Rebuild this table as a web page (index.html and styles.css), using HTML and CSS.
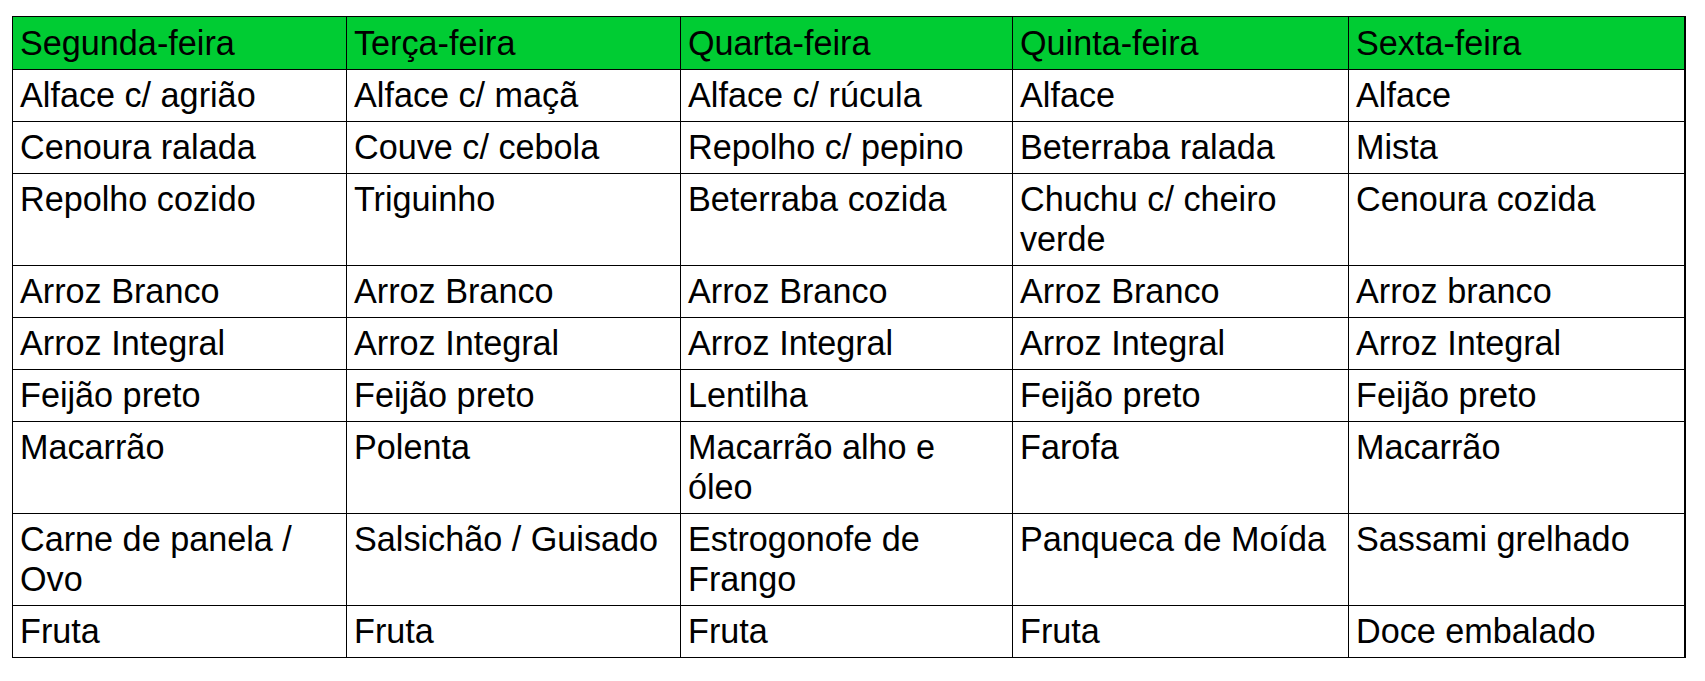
FILE: index.html
```html
<!DOCTYPE html>
<html lang="pt-BR">
<head>
<meta charset="utf-8">
<title>Cardápio</title>
<link rel="stylesheet" href="styles.css">
</head>
<body>
<table class="menu">
  <colgroup>
    <col class="c1"><col class="c2"><col class="c3"><col class="c4"><col class="c5">
  </colgroup>
  <thead>
    <tr><th>Segunda-feira</th><th>Terça-feira</th><th>Quarta-feira</th><th>Quinta-feira</th><th>Sexta-feira</th></tr>
  </thead>
  <tbody>
    <tr><td>Alface c/ agrião</td><td>Alface c/ maçã</td><td>Alface c/ rúcula</td><td>Alface</td><td>Alface</td></tr>
    <tr><td>Cenoura ralada</td><td>Couve c/ cebola</td><td>Repolho c/ pepino</td><td>Beterraba ralada</td><td>Mista</td></tr>
    <tr><td>Repolho cozido</td><td>Triguinho</td><td>Beterraba cozida</td><td>Chuchu c/ cheiro verde</td><td>Cenoura cozida</td></tr>
    <tr><td>Arroz Branco</td><td>Arroz Branco</td><td>Arroz Branco</td><td>Arroz Branco</td><td>Arroz branco</td></tr>
    <tr><td>Arroz Integral</td><td>Arroz Integral</td><td>Arroz Integral</td><td>Arroz Integral</td><td>Arroz Integral</td></tr>
    <tr><td>Feijão preto</td><td>Feijão preto</td><td>Lentilha</td><td>Feijão preto</td><td>Feijão preto</td></tr>
    <tr><td>Macarrão</td><td>Polenta</td><td>Macarrão alho e óleo</td><td>Farofa</td><td>Macarrão</td></tr>
    <tr><td>Carne de panela / Ovo</td><td>Salsichão / Guisado</td><td>Estrogonofe de Frango</td><td>Panqueca de Moída</td><td>Sassami grelhado</td></tr>
    <tr><td>Fruta</td><td>Fruta</td><td>Fruta</td><td>Fruta</td><td>Doce embalado</td></tr>
  </tbody>
</table>
</body>
</html>
```

FILE: styles.css
```css
html, body {
  margin: 0;
  padding: 0;
  background: #ffffff;
}
body {
  padding: 16px 0 0 12px;
  font-family: "Liberation Sans", Arial, sans-serif;
  color: #000000;
}
.menu {
  border-collapse: collapse;
  table-layout: fixed;
  width: 1672px;
}
.c1 { width: 334px; }
.c2 { width: 334px; }
.c3 { width: 332px; }
.c4 { width: 336px; }
.c5 { width: 336px; }
.menu th,
.menu td {
  border: 1px solid #000000;
  padding: 5px 7px 6px 7px;
  font-size: 34.2px;
  line-height: 40px;
  font-weight: normal;
  text-align: left;
  vertical-align: top;
}
.menu th {
  background: #00cc33;
  padding-top: 6px;
}
.menu tr > :last-child {
  border-right-width: 2px;
}
```
